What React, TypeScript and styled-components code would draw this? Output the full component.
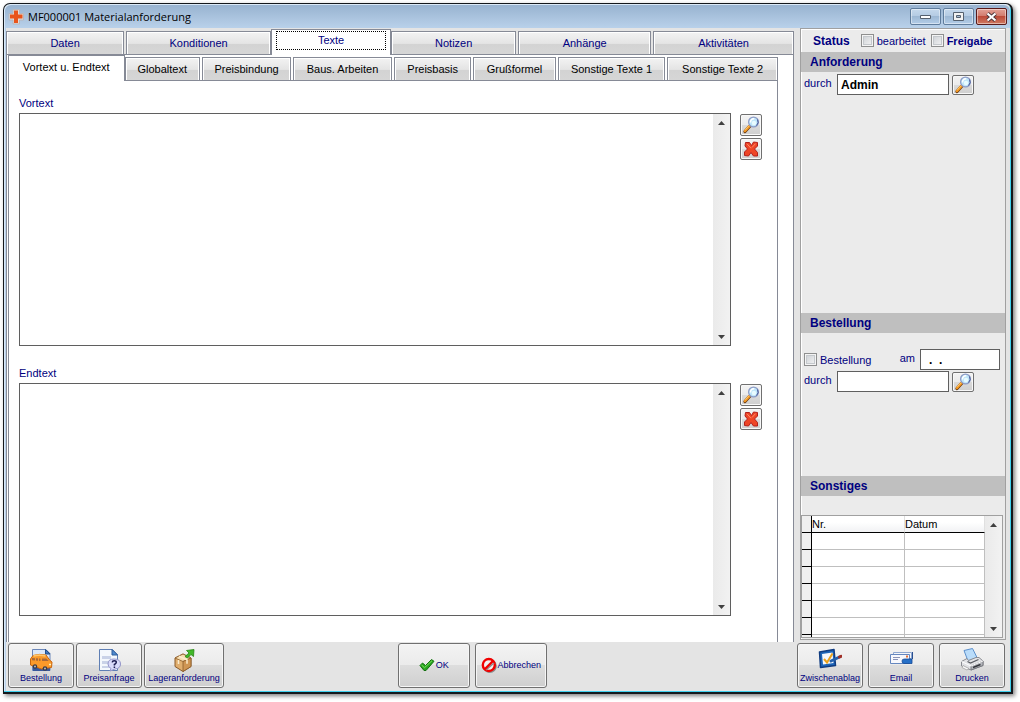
import React from "react";
import styled, { createGlobalStyle, css } from "styled-components";

const NAVY = "#000080";
const FACE = "#e4e4e4";
const LINE = "#868a96";

const GlobalStyle = createGlobalStyle`
  *, *::before, *::after { box-sizing: border-box; }
  body {
    margin: 0;
    background: #fff;
    font-family: "Liberation Sans", Arial, sans-serif;
    font-size: 11px;
    line-height: 14px;
    color: ${NAVY};
  }
  button, input, textarea { font: inherit; color: inherit; margin: 0; }
  svg { display: block; }
`;

const Page = styled.div`
  display: flex;
  min-height: 100vh;
  padding: 3px 7px 8px 3px;
`;

const Window = styled.div`
  flex: 1;
  min-width: 0;
  display: flex;
  flex-direction: column;
  background: ${FACE};
  border: 1px solid #14181c;
  border-right-width: 2px;
  border-bottom-width: 2px;
  border-radius: 7px 7px 0 0;
  box-shadow: inset -1px -1px 0 #3fd0ee, inset 1px 1px 0 #dbe9f7, inset 2px 0 0 #b9d1ea,
    2px 2px 4px rgba(0, 0, 0, 0.5);
`;

const TitleBar = styled.header`
  display: flex;
  align-items: center;
  gap: 4px;
  height: 23px;
  margin: 1px 1px 0;
  padding: 0 3px 0 3px;
  border-radius: 6px 6px 0 0;
  background: linear-gradient(#98b3d0, #b9d1ea);
`;

const Title = styled.h1`
  flex: 1;
  margin: 0;
  font: 400 11px/20px "Open Sans", "Noto Sans", sans-serif;
  color: #000;
`;

const WindowButtons = styled.div`
  display: flex;
  gap: 2px;
`;

const WindowButton = styled.button<{ $close?: boolean }>`
  display: flex;
  align-items: center;
  justify-content: center;
  width: 31px;
  height: 17px;
  padding: 0;
  border: 1px solid ${(p) => (p.$close ? "#5a1a1a" : "#5f7c9c")};
  border-radius: 2px;
  background: ${(p) =>
    p.$close
      ? "linear-gradient(#e2a196 0%, #d27a6c 48%, #bd4a38 50%, #cf7a62 100%)"
      : "linear-gradient(#c5d8ec 0%, #b4cbe3 48%, #9db8d4 50%, #b3cde8 100%)"};
  box-shadow: inset 0 0 0 1px rgba(255, 255, 255, 0.45);
`;

const Body = styled.div`
  flex: 1;
  display: flex;
  gap: 6px;
  padding: 0 5px 0 2px;
`;

const Main = styled.main`
  flex: 1;
  min-width: 0;
  display: flex;
  flex-direction: column;
  padding-top: 1px;
`;

const TabStrip = styled.div`
  position: relative;
  display: flex;
  align-items: flex-end;
  gap: 2px;
  height: 26px;
  box-shadow: inset 0 -1px 0 ${LINE};
`;

const tabFace = css`
  height: 24px;
  padding: 0;
  background: linear-gradient(#f3f3f3 0%, #e4e4e4 52%, #d3d3d3 56%, #d6d6d6 100%);
  box-shadow: inset 1px 1px 0 #fff, inset -1px 0 0 #fff;
`;

const activeFace = css`
  height: 26px;
  padding: 0 0 4px;
  background: #fff;
  border-bottom: 0;
  margin: 0 -2px;
  z-index: 1;
`;

const Tab = styled.button<{ $weight: number; $active?: boolean; $sub?: boolean }>`
  position: relative;
  flex: ${(p) => p.$weight} 1 0;
  min-width: 0;
  border: 1px solid ${LINE};
  color: ${(p) => (p.$sub ? "#000" : NAVY)};
  white-space: nowrap;
  ${(p) => (p.$active ? activeFace : tabFace)}
  &:first-child { margin-left: 0; }
`;

const FocusFrame = styled.span`
  display: block;
  margin: 0 4px;
  padding: 1px 0 2px;
  border: 1px dotted #000;
`;

const OuterPanel = styled.div`
  flex: 1;
  display: flex;
  padding: 0 15px 0 1px;
  background: #fff;
  border-right: 1px solid ${LINE};
  border-left: 1px solid ${LINE};
`;

const SubTabs = styled.div`
  flex: 1;
  min-width: 0;
  display: flex;
  flex-direction: column;
`;

const SubPanel = styled.div`
  flex: 1;
  display: flex;
  flex-direction: column;
  gap: 20px;
  padding: 15px 15px 26px 10px;
  border-left: 1px solid ${LINE};
  border-right: 1px solid ${LINE};
`;

const TextBlock = styled.div`
  flex: 1;
  display: flex;
  flex-direction: column;
  gap: 3px;
`;

const TextRow = styled.div`
  flex: 1;
  display: flex;
  gap: 9px;
`;

const TextFrame = styled.div`
  flex: 1;
  display: flex;
  border: 1px solid #5f5f5f;
  background: #fff;
`;

const TextArea = styled.textarea`
  flex: 1;
  min-width: 0;
  min-height: 80px;
  padding: 2px 4px;
  border: 0;
  outline: 0;
  resize: none;
  overflow: hidden;
  background: transparent;
`;

const ScrollTrack = styled.div`
  display: flex;
  flex-direction: column;
  justify-content: space-between;
  width: 17px;
  background: linear-gradient(90deg, #eaeaea, #f2f2f2);
`;

const ScrollButton = styled.button`
  display: flex;
  align-items: center;
  justify-content: center;
  width: 17px;
  height: 17px;
  padding: 0;
  border: 0;
  background: transparent;
`;

const ToolColumn = styled.div`
  display: flex;
  flex-direction: column;
  gap: 2px;
  padding-top: 1px;
`;

const ToolButton = styled.button<{ $low?: boolean }>`
  display: flex;
  align-items: center;
  justify-content: center;
  width: 22px;
  height: ${(p) => (p.$low ? 20 : 22)}px;
  padding: 0;
  border: 1px solid #707070;
  border-radius: 2px;
  background: linear-gradient(#f3f3f3 0%, #ebebeb 50%, #dadada 52%, #cfcfcf 100%);
  box-shadow: inset 0 0 0 1px #f8f8f8;
`;

const Sidebar = styled.aside`
  width: 206px;
  display: flex;
  flex-direction: column;
  margin-bottom: 2px;
  background: #ebebeb;
  border: 1px solid #a0a0a0;
  box-shadow: inset 1px 1px 0 #fff;
`;

const StatusRow = styled.div`
  display: flex;
  align-items: center;
  gap: 5px;
  height: 23px;
  padding: 0 0 0 12px;
`;

const StatusTitle = styled.strong`
  margin-right: 6px;
  font-size: 12px;
`;

const SectionTitle = styled.h2`
  height: 20px;
  margin: 0;
  padding: 0 9px;
  background: #bfbfbf;
  font-size: 12px;
  line-height: 20px;
`;

const Section = styled.section<{ $weight: number; $top: number }>`
  flex: ${(p) => p.$weight} 1 0;
  display: flex;
  flex-direction: column;
  gap: 1px;
  padding: ${(p) => p.$top}px 5px 0 3px;
`;

const FieldRow = styled.div`
  display: flex;
  align-items: center;
  gap: 3px;
`;

const FieldLabel = styled.label`
  width: 30px;
  padding-bottom: 3px;
`;

const Field = styled.input<{ $width: number; $inset?: number }>`
  width: ${(p) => p.$width}px;
  height: 21px;
  padding: 0 0 0 ${(p) => p.$inset || 3}px;
  border: 1px solid #5f5f5f;
  outline: 0;
  background: #fff;
  color: #000;
  font-size: 12px;
  font-weight: 700;
`;

const DateLabel = styled.label`
  margin-left: auto;
  padding: 0 2px 3px 0;
`;

const CheckLabel = styled.label<{ $bold?: boolean }>`
  display: flex;
  align-items: center;
  gap: 3px;
  font-weight: ${(p) => (p.$bold ? 700 : 400)};
`;

const CheckBox = styled.input.attrs({ type: "checkbox" })`
  appearance: none;
  width: 13px;
  height: 13px;
  border: 1px solid #8e8f8f;
  background: linear-gradient(135deg, #c9cdd2, #f6f6f6);
  box-shadow: inset 0 0 0 1px #f4f4f4, inset 0 0 0 2px #c4c8cc;
`;

const GridFrame = styled.div`
  display: flex;
  height: 123px;
  margin: 19px 2px 1px 0;
  border: 1px solid #a0a0a0;
  background: #fff;
  overflow: hidden;
`;

const GridClip = styled.div`
  flex: 1;
  min-width: 0;
  overflow: hidden;
`;

const Grid = styled.table`
  width: 100%;
  table-layout: fixed;
  border-collapse: separate;
  border-spacing: 0;
  color: #000;
  th, td { height: 17px; padding: 0; border-right: 1px solid #bfbfbf; border-bottom: 1px solid #bfbfbf; }
  thead th {
    font-weight: 400;
    text-align: left;
    line-height: 16px;
    border-bottom-color: #000;
    border-right-color: #e0e0e0;
    background: linear-gradient(#fff 40%, #f1f2f4);
  }
  tr > :first-child { border-right-color: #000; border-bottom-color: #000; background: #efefef; }
`;

const Footer = styled.footer`
  display: grid;
  grid-template-columns: auto 41fr auto 59fr auto;
  padding: 1px 6px 4px 4px;
`;

const ButtonGroup = styled.div<{ $column: number; $gap: number }>`
  grid-column: ${(p) => p.$column};
  display: flex;
  gap: ${(p) => p.$gap}px;
`;

const ActionButton = styled.button<{ $width: number; $inline?: boolean }>`
  display: flex;
  flex-direction: ${(p) => (p.$inline ? "row" : "column")};
  align-items: center;
  justify-content: center;
  gap: ${(p) => (p.$inline ? 1 : 0)}px;
  width: ${(p) => p.$width}px;
  height: 45px;
  padding: 0 0 ${(p) => (p.$inline ? 1 : 0)}px;
  overflow: hidden;
  border: 1px solid #707070;
  border-radius: 3px;
  background: linear-gradient(#f3f3f3 0%, #ebebeb 48%, #dddddd 50%, #cfcfcf 100%);
  box-shadow: inset 0 0 0 1px #f6f6f6;
  font-size: 9px;
  line-height: 12px;
  white-space: nowrap;
  svg { flex: none; }
`;

const CrossLogo = () => (
  <svg width="16" height="16" viewBox="0 0 16 16">
    <path d="M5 .500h6.500V4.500h4V11h-4v4H5v-4H1V4.500h4z" fill="#e2dcd8" stroke="#b9b6ba" />
    <path d="M6 1.500h4v4h4.500v4H10v4.500H6V9.500H2v-4h4z" fill="#e8541c" />
  </svg>
);

const MagnifierIcon = () => (
  <svg width="18" height="18" viewBox="0 0 18 18">
    <path d="M8 10 3 15.500" stroke="#6b3a10" strokeWidth="3.200" strokeLinecap="round" />
    <path d="M7.600 9.900 3 15" stroke="#f59a23" strokeWidth="2.400" strokeLinecap="round" />
    <path d="m7.300 9.500-4 4.300" stroke="#ffd27a" strokeWidth="0.800" />
    <circle cx="11.500" cy="6" r="4.900" fill="#bfe6fa" stroke="#8d9cc6" strokeWidth="1.300" />
    <path d="M8.500 6.500a3.200 3.200 0 0 1 3.700-3.600" stroke="#fff" strokeWidth="1.500" fill="none" />
    <path d="M15.500 3.500a5 5 0 0 1-1 6" stroke="#4a5a9a" strokeWidth="1" fill="none" />
    <circle cx="12" cy="7" r="2.200" fill="#e8fbff" />
  </svg>
);

const DeleteIcon = () => (
  <svg width="16" height="16" viewBox="0 0 16 16">
    <path
      d="M2.500 1.500h4L8.500 4.500l2-3.500 4 .500v3.500L11.500 8l3 3.500v3.500h-4L8 11.500l-2.500 3.500-4-.500V11L4.500 8 2 5z"
      fill="#ee4526"
      stroke="#b3201a"
      strokeLinejoin="round"
    />
    <path d="m4 2.800 4 4.500M12.500 2.700 9 6.500" stroke="#ff8a66" strokeWidth="1" />
  </svg>
);

const Arrow = ({ down }: { down?: boolean }) => (
  <svg width="7" height="4" viewBox="0 0 7 4">
    <path d={down ? "M0 0h7L3.500 4z" : "M0 4h7L3.500 0z"} fill="#404040" />
  </svg>
);

const VanIcon = () => (
  <svg width="24" height="24" viewBox="0 0 24 24">
    <path d="M3.500 1.500H17l4 4v17H3.500z" fill="#dce8f8" stroke="#6b86b8" />
    <path d="M4 19h17v4H4z" fill="#38589c" />
    <path d="M16.500 1.500v4.500H21z" fill="#3e76be" stroke="#23508c" />
    <path d="M1.500 11 4 7.500Q10 5.500 17 7l4 5.500 2 1.500-.500 5.500-10 1.500-11-4z" fill="#fb9a2a" stroke="#c9660f" />
    <path d="M4.500 7.800Q10 6.300 16.500 7.800" stroke="#ffc66a" strokeWidth="1.800" fill="none" />
    <path d="m3 10 8.500.500v2.500L3 12.300zM13 10.500h4.300l2.500 2.500H13z" fill="#a8693a" />
    <path d="M6.500 9.500v3.500M9.500 9.700v3.500" stroke="#fb9a2a" />
    <circle cx="6" cy="18.500" r="2.200" fill="#3a3a44" />
    <circle cx="16" cy="20.500" r="2.300" fill="#3a3a44" />
    <circle cx="6" cy="18.500" r="1" fill="#bbb" />
    <circle cx="16" cy="20.500" r="1" fill="#bbb" />
    <path d="M20 16.500h2" stroke="#fff6c0" strokeWidth="1.500" />
  </svg>
);

const InquiryIcon = () => (
  <svg width="24" height="24" viewBox="0 0 24 24">
    <path d="M2.500 1.500h13l5 5v16h-18z" fill="#f4f8fd" stroke="#5f7fb4" />
    <path d="M15 1.500V7h5.500z" fill="#4f8bd0" stroke="#2d5c9c" />
    <path d="M5 8h9v3H5zM5 13h6v3H5zM5 18h7v2H5z" fill="#c9d2e8" />
    <path d="M11 16q0-5 6-5 6.500 0 6.500 5 0 4.500-5.500 5l-5 2 1-2.500q-3-1.500-3-4.500z" fill="#d9dafa" stroke="#9294c8" />
    <path d="M15.200 14.300q.300-1.600 2-1.600 2.100 0 2.100 1.600 0 1.200-1.900 2.200v.900M17.400 18.500v1.400" stroke="#1c1c50" strokeWidth="1.500" fill="none" />
  </svg>
);

const BoxIcon = () => (
  <svg width="24" height="24" viewBox="0 0 24 24">
    <path d="m3 10 8-4 8 4v8.500l-8 5-8-5z" fill="#e0ae6e" stroke="#8a5a28" />
    <path d="m3 10 8 3.500L19 10l-8-4z" fill="#f6dcae" stroke="#8a5a28" strokeWidth="0.800" />
    <path d="M11 13.500v10l8-5V10z" fill="#cf9654" stroke="#8a5a28" strokeWidth="0.800" />
    <path d="m7 8.300 8 3.500v4M6.500 12v4" stroke="#fbebcc" strokeWidth="1.500" fill="none" />
    <path d="m13 8.500 4-3.500-2.500-2.500 7.500-1-.500 7-2.500-2L15.500 10z" fill="#42b928" stroke="#278414" strokeWidth="0.800" />
  </svg>
);

const CheckIcon = () => (
  <svg width="16" height="16" viewBox="0 0 16 16">
    <path d="m1 8.500 2.500-2.500L6.500 8.500 12.500 2.500l2.500 1.800L7 13.500H5z" fill="#27a51f" stroke="#147010" strokeLinejoin="round" />
    <path d="m2.500 8 3 2.700 7.500-7" stroke="#7ee060" strokeWidth="1" fill="none" />
  </svg>
);

const ForbiddenIcon = () => (
  <svg width="16" height="16" viewBox="0 0 16 16">
    <circle cx="8.800" cy="9" r="6" fill="none" stroke="#8c8c8c" strokeWidth="2" />
    <circle cx="7.800" cy="8" r="6" fill="#f2f2f2" stroke="#f00000" strokeWidth="2.400" />
    <path d="m5 13 8-7" stroke="#8c8c8c" strokeWidth="1.500" />
    <path d="m4 12 8-8" stroke="#f00000" strokeWidth="2.400" />
  </svg>
);

const ClipboardIcon = () => (
  <svg width="24" height="24" viewBox="0 0 24 24">
    <path d="M1.500 4 16 1.500 17.500 17.500 2.500 19.500z" fill="#1d65b8" stroke="#103c80" strokeWidth="1.500" strokeLinejoin="round" />
    <path d="m4 6 10.500-1.500 1 10.500L5 16.500z" fill="#f4f7fc" />
    <path d="m6 11 3 3.500 5.500-9" stroke="#eba21c" strokeWidth="2" fill="none" />
    <path d="m13 13 8.500-4" stroke="#2360ac" strokeWidth="3" strokeLinecap="round" />
    <path d="m21.500 9 1.500-.700" stroke="#a03028" strokeWidth="3" strokeLinecap="round" />
  </svg>
);

const MailIcon = () => (
  <svg width="24" height="24" viewBox="0 0 24 24">
    <path d="M4.500 4.500h18v6h-18z" fill="#f4f6fa" stroke="#8da6d0" />
    <path d="M1.500 6.500h19v9h-19z" fill="#f7f8fd" stroke="#6587bf" />
    <path d="M4 9.500h7M4 11.500h5" stroke="#8a94b8" />
    <path d="M17 7.500h2v2h-2z" fill="#df6f38" />
    <path d="M13 13q0-2 2.500-2H23v4.500H15q-2 0-2-2.500z" fill="#2670c8" stroke="#164a96" strokeWidth="0.800" />
    <path d="M23.500 4v7" stroke="#294f90" />
  </svg>
);

const PrinterIcon = () => (
  <svg width="24" height="24" viewBox="0 0 24 24">
    <path d="M4 2.500 12.500.500 17 9.500 8 13z" fill="#b9dcfa" stroke="#5b8fcb" strokeLinejoin="round" />
    <path d="m1.500 13.500 5.500-3 1.500 2L16 9.500h3l4 3.500v4.500L11 22 1.500 18z" fill="#e2e3e6" stroke="#8a8c92" strokeLinejoin="round" />
    <path d="M11 18v4l12-4.500V13z" fill="#b4b6bc" stroke="#77797f" />
    <path d="m1.500 13.500 9.500 4.500L23 13" fill="none" stroke="#fff" />
    <path d="m13 19.500 7.500-3" stroke="#33353b" strokeWidth="1.500" />
    <path d="m3 17.500 6 3-2 1.500-5-2.500z" fill="#f8f8f8" stroke="#999" strokeWidth="0.700" />
    <path d="m7.500 13.500 3 1.500 8-3.500" stroke="#595b61" strokeWidth="1.200" fill="none" />
  </svg>
);

const mainTabs = [
  { name: "Daten", weight: 118 },
  { name: "Konditionen", weight: 145 },
  { name: "Texte", weight: 120 },
  { name: "Notizen", weight: 125 },
  { name: "Anhänge", weight: 133 },
  { name: "Aktivitäten", weight: 141 },
];

const subTabs = [
  { name: "Vortext u. Endtext", weight: 117 },
  { name: "Globaltext", weight: 75 },
  { name: "Preisbindung", weight: 89 },
  { name: "Baus. Arbeiten", weight: 99 },
  { name: "Preisbasis", weight: 77 },
  { name: "Grußformel", weight: 82 },
  { name: "Sonstige Texte 1", weight: 108 },
  { name: "Sonstige Texte 2", weight: 111 },
];

const ScrollBar = () => (
  <ScrollTrack>
    <ScrollButton aria-label="Nach oben"><Arrow /></ScrollButton>
    <ScrollButton aria-label="Nach unten"><Arrow down /></ScrollButton>
  </ScrollTrack>
);

const TextEditor = ({ id, label }: { id: string; label: string }) => (
  <TextBlock>
    <label htmlFor={id}>{label}</label>
    <TextRow>
      <TextFrame>
        <TextArea id={id} />
        <ScrollBar />
      </TextFrame>
      <ToolColumn>
        <ToolButton aria-label={`${label} suchen`}><MagnifierIcon /></ToolButton>
        <ToolButton aria-label={`${label} löschen`}><DeleteIcon /></ToolButton>
      </ToolColumn>
    </TextRow>
  </TextBlock>
);

export default function App() {
  return (
    <>
      <GlobalStyle />
      <Page>
        <Window>
          <TitleBar>
            <CrossLogo />
            <Title>MF000001 Materialanforderung</Title>
            <WindowButtons>
              <WindowButton aria-label="Minimieren">
                <svg width="13" height="6"><path d="M1.500 1.500h10v3h-10z" fill="#fff" stroke="#55606e" /></svg>
              </WindowButton>
              <WindowButton aria-label="Maximieren">
                <svg width="11" height="9"><path d="M.500.500h10v8H.500z" fill="#f2f2f2" stroke="#55606e" /><path d="M3.500 3.500h4v2h-4z" fill="#a8bdd4" stroke="#55606e" /></svg>
              </WindowButton>
              <WindowButton $close aria-label="Schließen">
                <svg width="13" height="10"><path d="m2.500 1.500 8 7m0-7-8 7" stroke="#4a3438" strokeWidth="4" /><path d="m2.500 1.500 8 7m0-7-8 7" stroke="#fff" strokeWidth="2.200" /></svg>
              </WindowButton>
            </WindowButtons>
          </TitleBar>

          <Body>
            <Main>
              <TabStrip role="tablist">
                {mainTabs.map((t) => (
                  <Tab key={t.name} role="tab" $weight={t.weight} $active={t.name === "Texte"}>
                    {t.name === "Texte" ? <FocusFrame>{t.name}</FocusFrame> : t.name}
                  </Tab>
                ))}
              </TabStrip>
              <OuterPanel>
                <SubTabs>
                  <TabStrip role="tablist">
                    {subTabs.map((t, i) => (
                      <Tab key={t.name} role="tab" $sub $weight={t.weight} $active={i === 0}>
                        {t.name}
                      </Tab>
                    ))}
                  </TabStrip>
                  <SubPanel>
                    <TextEditor id="vortext" label="Vortext" />
                    <TextEditor id="endtext" label="Endtext" />
                  </SubPanel>
                </SubTabs>
              </OuterPanel>
            </Main>

            <Sidebar>
              <StatusRow>
                <StatusTitle>Status</StatusTitle>
                <CheckLabel><CheckBox />bearbeitet</CheckLabel>
                <CheckLabel $bold><CheckBox />Freigabe</CheckLabel>
              </StatusRow>
              <SectionTitle>Anforderung</SectionTitle>
              <Section $weight={239} $top={2}>
                <FieldRow>
                  <FieldLabel htmlFor="anf-durch">durch</FieldLabel>
                  <Field id="anf-durch" $width={112} defaultValue="Admin" />
                  <ToolButton $low aria-label="Person suchen"><MagnifierIcon /></ToolButton>
                </FieldRow>
              </Section>
              <SectionTitle>Bestellung</SectionTitle>
              <Section $weight={127} $top={16}>
                <FieldRow>
                  <CheckLabel><CheckBox />Bestellung</CheckLabel>
                  <DateLabel htmlFor="best-am">am</DateLabel>
                  <Field id="best-am" $width={80} $inset={8} defaultValue=".  ." />
                </FieldRow>
                <FieldRow>
                  <FieldLabel htmlFor="best-durch">durch</FieldLabel>
                  <Field id="best-durch" $width={112} />
                  <ToolButton $low aria-label="Besteller suchen"><MagnifierIcon /></ToolButton>
                </FieldRow>
              </Section>
              <SectionTitle>Sonstiges</SectionTitle>
              <GridFrame>
                <GridClip>
                  <Grid>
                    <colgroup>
                      <col width="10" />
                      <col width="93" />
                      <col />
                    </colgroup>
                    <thead>
                      <tr><th /><th>Nr.</th><th>Datum</th></tr>
                    </thead>
                    <tbody>
                      {Array.from({ length: 7 }, (_, i) => (
                        <tr key={i}><td /><td /><td /></tr>
                      ))}
                    </tbody>
                  </Grid>
                </GridClip>
                <ScrollBar />
              </GridFrame>
            </Sidebar>
          </Body>

          <Footer>
            <ButtonGroup $column={1} $gap={2}>
              <ActionButton $width={66}><VanIcon />Bestellung</ActionButton>
              <ActionButton $width={66}><InquiryIcon />Preisanfrage</ActionButton>
              <ActionButton $width={80}><BoxIcon />Lageranforderung</ActionButton>
            </ButtonGroup>
            <ButtonGroup $column={3} $gap={5}>
              <ActionButton $width={72} $inline><CheckIcon />OK</ActionButton>
              <ActionButton $width={72} $inline><ForbiddenIcon />Abbrechen</ActionButton>
            </ButtonGroup>
            <ButtonGroup $column={5} $gap={5}>
              <ActionButton $width={66}><ClipboardIcon />Zwischenablag</ActionButton>
              <ActionButton $width={66}><MailIcon />Email</ActionButton>
              <ActionButton $width={66}><PrinterIcon />Drucken</ActionButton>
            </ButtonGroup>
          </Footer>
        </Window>
      </Page>
    </>
  );
}
